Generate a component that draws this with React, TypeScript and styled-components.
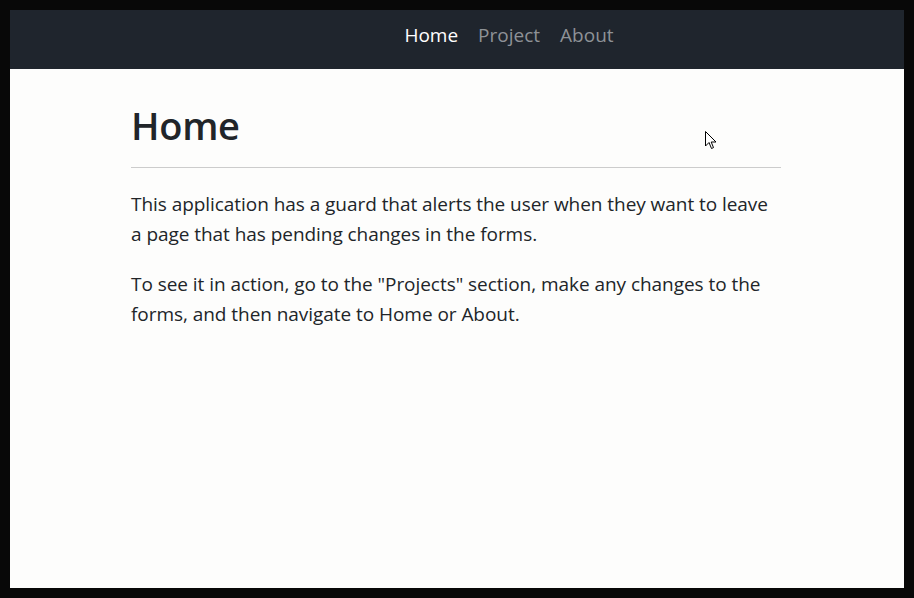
import React from "react";
import styled, { createGlobalStyle } from "styled-components";

const Global = createGlobalStyle`
  html, body { margin: 0; padding: 0; background: #080808; }
  body { font-family: "Open Sans", "Noto Sans", sans-serif; }
  * { box-sizing: border-box; }
`;

const Frame = styled.div`
  width: 914px;
  height: 598px;
  padding: 10px;
  background: #080808;
`;

const Screen = styled.div`
  position: relative;
  width: 894px;
  height: 578px;
  background: #fdfdfc;
  display: flex;
  flex-direction: column;
  overflow: hidden;
`;

const NavBar = styled.nav`
  height: 59px;
  background: #1f252d;
  display: flex;
  align-items: center;
  justify-content: center;
  padding-left: 104px;
  padding-bottom: 10px;
`;

const NavList = styled.ul`
  list-style: none;
  margin: 0;
  padding: 0;
  display: flex;
  gap: 20px;
`;

const NavLink = styled.a<{ $active?: boolean }>`
  font-size: 19px;
  line-height: 24px;
  color: ${(p) => (p.$active ? "#ffffff" : "#8e9297")};
  text-decoration: none;
  cursor: pointer;
`;

const Main = styled.main`
  width: 650px;
  margin: 0 auto;
  padding-top: 32px;
  color: #212529;
  transform: translateX(-1px);
`;

const Title = styled.h1`
  font-size: 38px;
  font-weight: 600;
  line-height: 48px;
  margin: 0 0 18px;
  letter-spacing: -0.3px;
`;

const Rule = styled.hr`
  border: 0;
  border-top: 1px solid #cccccc;
  margin: 0 0 21px;
`;

const Para = styled.p`
  font-size: 19px;
  line-height: 30px;
  margin: 0 0 20px;
  letter-spacing: -0.05px;
`;

const Cursor = styled.svg`
  position: absolute;
  left: 695px;
  top: 121px;
`;

export default function App() {
  return (
    <Frame>
      <Global />
      <Screen>
        <NavBar>
          <NavList>
            <li><NavLink $active>Home</NavLink></li>
            <li><NavLink>Project</NavLink></li>
            <li><NavLink>About</NavLink></li>
          </NavList>
        </NavBar>
        <Main>
          <Title>Home</Title>
          <Rule />
          <Para>
            This application has a guard that alerts the user when they want to leave a page
            that has pending changes in the forms.
          </Para>
          <Para>
            To see it in action, go to the "Projects" section, make any changes to the forms,
            and then navigate to Home or About.
          </Para>
        </Main>
        <Cursor width="14" height="20" viewBox="0 0 14 20">
          <path
            d="M0.5 0.5 L0.5 15 L4 11.5 L6.5 17.5 L8.5 16.6 L6.2 11 L11 11 Z"
            fill="#ffffff"
            stroke="#000000"
            strokeWidth="1"
            strokeLinejoin="miter"
          />
        </Cursor>
      </Screen>
    </Frame>
  );
}
